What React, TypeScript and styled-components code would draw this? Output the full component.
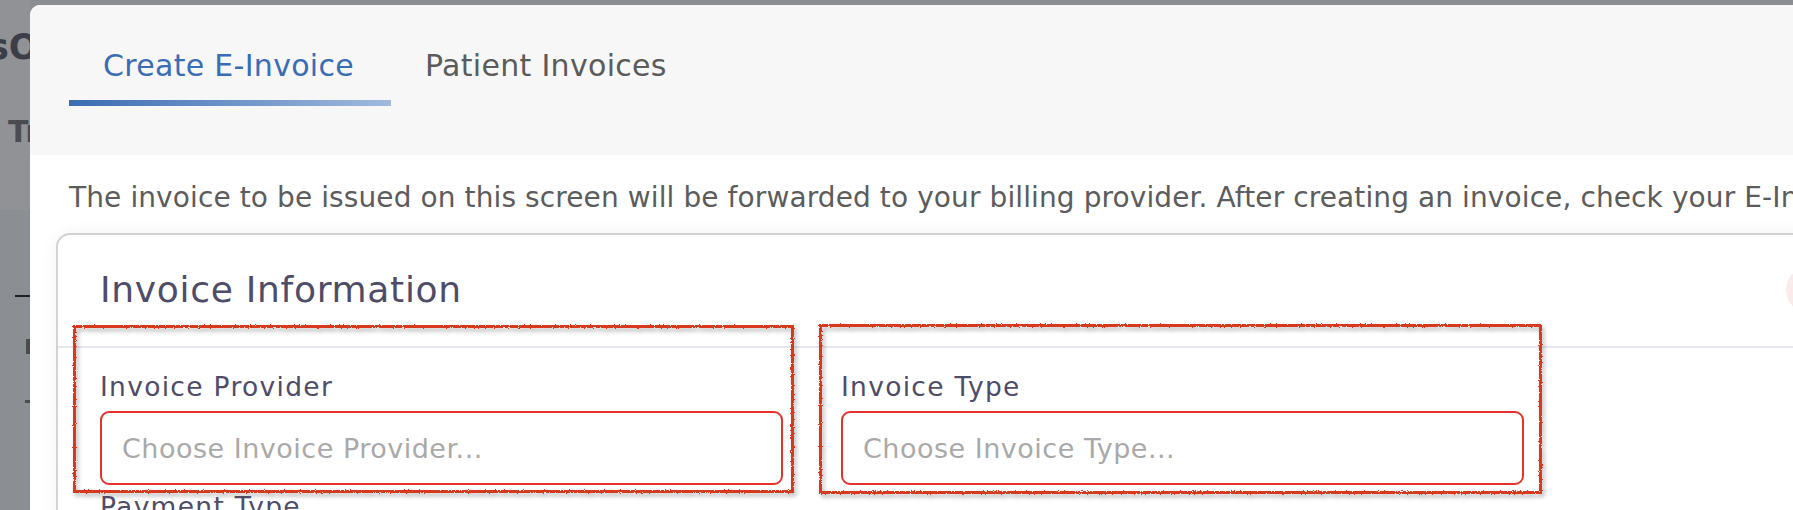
import React from 'react';
import styled, { createGlobalStyle } from 'styled-components';

const GlobalStyle = createGlobalStyle`
  html, body {
    margin: 0;
    padding: 0;
    overflow: hidden;
    background: #8b8e92;
    font-family: 'DejaVu Sans', 'Liberation Sans', sans-serif;
  }
`;

interface fieldItem {
  label: string;
  placeholder: string;
  mark?: string;
}

const fields: fieldItem[] = [
  { label: 'Invoice Provider', placeholder: 'Choose Invoice Provider...', mark: '-46px -11px -8px -27px' },
  { label: 'Invoice Type', placeholder: 'Choose Invoice Type...', mark: '-47px -18px -9px -22px' },
  { label: 'Payment Type', placeholder: 'Choose Payment Type...' },
];

const App = () => {
  return (
    <Page>
      <GlobalStyle />
      {/* hand drawn look for the red marks */}
      <HiddenSvg aria-hidden>
        <filter id="rough">
          <feTurbulence type="fractalNoise" baseFrequency="0.8" numOctaves="2" result="noise" />
          <feDisplacementMap in="SourceGraphic" in2="noise" scale="3" />
        </filter>
      </HiddenSvg>

      <BackPage>
        <BackTop>
          <BackTitle>sO</BackTitle>
          <BackSub>Tr</BackSub>
        </BackTop>
        <BackBody>
          <BackLine />
          <BackBlock />
          <BackDash />
        </BackBody>
      </BackPage>

      <Modal>
        <ModalHeader>
          <Tab $active>Create E-Invoice</Tab>
          <Tab>Patient Invoices</Tab>
        </ModalHeader>

        <ModalBody>
          <Notice>
            The invoice to be issued on this screen will be forwarded to your billing provider. After creating an
            invoice, check your E-Invoice provider panel.
          </Notice>

          <Card>
            <CardHeader>
              <CardTitle>Invoice Information</CardTitle>
              <CloseDot />
            </CardHeader>
            <FieldGrid>
              {fields.map(f => (
                <Field key={f.label}>
                  {f.mark && <Mark $inset={f.mark} />}
                  <Label>{f.label}</Label>
                  <Select>
                    <span>{f.placeholder}</span>
                  </Select>
                </Field>
              ))}
            </FieldGrid>
          </Card>
        </ModalBody>
      </Modal>
    </Page>
  );
};

export default App;

const Page = styled.div`
  position: relative;
  width: 1793px;
  height: 510px;
  overflow: hidden;
`;

const HiddenSvg = styled.svg`
  position: absolute;
  width: 0;
  height: 0;
`;

const BackPage = styled.div`
  display: flex;
  flex-direction: column;
  width: 30px;
  height: 510px;
  overflow: hidden;
`;

const BackTop = styled.div`
  height: 210px;
  background: #909296;
  display: flex;
  flex-direction: column;
`;

const BackTitle = styled.div`
  margin: 26px 0 0 -12px;
  font-size: 35px;
  line-height: 42px;
  font-weight: 700;
  color: #3b3e49;
  white-space: nowrap;
`;

const BackSub = styled.div`
  margin: 46px 0 0 8px;
  font-size: 30px;
  line-height: 36px;
  font-weight: 700;
  color: #4a4c51;
  white-space: nowrap;
`;

const BackBody = styled.div`
  flex: 1;
  display: flex;
  flex-direction: column;
  align-items: flex-end;
`;

const BackLine = styled.div`
  margin-top: 85px;
  width: 15px;
  height: 2px;
  background: #1f2023;
`;

const BackBlock = styled.div`
  margin-top: 42px;
  width: 4px;
  height: 15px;
  background: #4a4c50;
`;

const BackDash = styled.div`
  margin-top: 46px;
  width: 5px;
  height: 3px;
  background: #4a4c50;
`;

const Modal = styled.div`
  position: absolute;
  left: 30px;
  top: 5px;
  width: 1851px;
  height: 560px;
  background: #fff;
  border-radius: 10px 10px 0 0;
  overflow: hidden;
`;

const ModalHeader = styled.div`
  display: flex;
  align-items: flex-start;
  height: 150px;
  box-sizing: border-box;
  padding: 43px 39px 0;
  background: #f7f7f7;
`;

const Tab = styled.div<{ $active?: boolean }>`
  position: relative;
  padding: 0 37px 16px 34px;
  font-size: 30px;
  line-height: 36px;
  letter-spacing: 0.3px;
  color: ${({ $active }) => ($active ? '#3a6db5' : '#5b5b5b')};
  white-space: nowrap;

  &::after {
    content: '';
    position: absolute;
    left: 0;
    right: 0;
    bottom: -6px;
    height: 6px;
    background: ${({ $active }) => ($active ? 'linear-gradient(90deg, #3b6cb3, #a0badd)' : 'transparent')};
  }
`;

const ModalBody = styled.div`
  padding: 26px 0 0;
`;

const Notice = styled.p`
  margin: 0 0 0 39px;
  font-size: 28px;
  line-height: 34px;
  letter-spacing: 0.1px;
  color: #5c5c5c;
  white-space: nowrap;
`;

const Card = styled.div`
  margin: 18px 26px 0;
  border: 2px solid #d2d2d2;
  border-radius: 14px;
  background: #fff;
  box-shadow: 0 0 16px rgba(0, 0, 0, 0.06);
`;

const CardHeader = styled.div`
  display: flex;
  align-items: center;
  justify-content: space-between;
  padding: 32px 21px 33px 42px;
  border-bottom: 2px solid #e8e7ef;
`;

const CardTitle = styled.h2`
  margin: 0;
  font-size: 36px;
  line-height: 44px;
  font-weight: 500;
  letter-spacing: 0.7px;
  color: #4f4c69;
`;

const CloseDot = styled.div`
  width: 46px;
  height: 46px;
  border-radius: 50%;
  background: #fbeaea;
`;

const FieldGrid = styled.div`
  display: grid;
  grid-template-columns: 683px 683px;
  column-gap: 58px;
  row-gap: 6px;
  padding: 23px 42px 40px;
`;

const Field = styled.div`
  position: relative;
  display: flex;
  flex-direction: column;
`;

const Mark = styled.div<{ $inset: string }>`
  position: absolute;
  inset: ${({ $inset }) => $inset};
  border: 3px solid #d8391e;
  filter: url(#rough) drop-shadow(2px 3px 2px rgba(0, 0, 0, 0.3));
  pointer-events: none;
`;

const Label = styled.label`
  font-size: 26.5px;
  line-height: 32px;
  font-weight: 500;
  letter-spacing: 1.3px;
  color: #4f4c69;
  margin-bottom: 8px;
`;

const Select = styled.div`
  display: flex;
  align-items: center;
  height: 74px;
  box-sizing: border-box;
  padding: 0 20px;
  border: 2px solid #e5322a;
  border-radius: 9px;
  background: #fff;

  span {
    font-size: 27px;
    letter-spacing: 0.5px;
    color: #a9a9a9;
    white-space: nowrap;
  }
`;
